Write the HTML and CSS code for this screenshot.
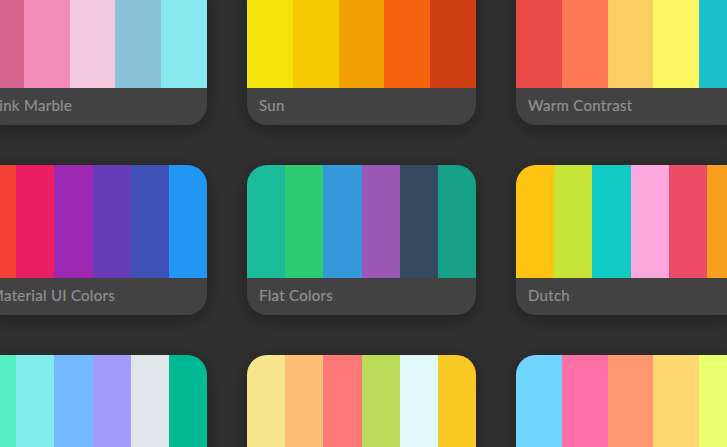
FILE: index.html
```html
<!DOCTYPE html>
<html>
<head>
<meta charset="utf-8">
<link rel="stylesheet" href="styles.css">
</head>
<body>
<div class="grid">
  <div class="card">
    <div class="swatches">
      <span style="background:#d66590"></span><span style="background:#f48cbb"></span><span style="background:#f5c9e2"></span><span style="background:#8ac3d9"></span><span style="background:#87e8f0"></span>
    </div>
    <div class="label">Pink Marble</div>
  </div>
  <div class="card">
    <div class="swatches">
      <span style="background:#f4e409"></span><span style="background:#f4c904"></span><span style="background:#f2a104"></span><span style="background:#f5630f"></span><span style="background:#cf3f11"></span>
    </div>
    <div class="label">Sun</div>
  </div>
  <div class="card">
    <div class="swatches">
      <span style="background:#e84a4a"></span><span style="background:#fe7856"></span><span style="background:#fccd63"></span><span style="background:#fdf862"></span><span style="background:#1cbec9"></span>
    </div>
    <div class="label">Warm Contrast</div>
  </div>
  <div class="card">
    <div class="swatches">
      <span style="background:#f44336"></span><span style="background:#e91e63"></span><span style="background:#9c27b0"></span><span style="background:#673ab7"></span><span style="background:#3f51b5"></span><span style="background:#2196f3"></span>
    </div>
    <div class="label">Material UI Colors</div>
  </div>
  <div class="card">
    <div class="swatches">
      <span style="background:#1abc9c"></span><span style="background:#2ecc71"></span><span style="background:#3498db"></span><span style="background:#9b59b6"></span><span style="background:#34495e"></span><span style="background:#16a085"></span>
    </div>
    <div class="label">Flat Colors</div>
  </div>
  <div class="card">
    <div class="swatches">
      <span style="background:#ffc312"></span><span style="background:#c4e538"></span><span style="background:#12cbc4"></span><span style="background:#fda7df"></span><span style="background:#ed4c67"></span><span style="background:#f79f1f"></span>
    </div>
    <div class="label">Dutch</div>
  </div>
  <div class="card">
    <div class="swatches">
      <span style="background:#55efc4"></span><span style="background:#81ecec"></span><span style="background:#74b9ff"></span><span style="background:#a29bfe"></span><span style="background:#dfe6e9"></span><span style="background:#00b894"></span>
    </div>
    <div class="label">American</div>
  </div>
  <div class="card">
    <div class="swatches">
      <span style="background:#f6e58d"></span><span style="background:#ffbe76"></span><span style="background:#ff7979"></span><span style="background:#badc58"></span><span style="background:#dff9fb"></span><span style="background:#f9ca24"></span>
    </div>
    <div class="label">Aussie</div>
  </div>
  <div class="card">
    <div class="swatches">
      <span style="background:#70d6ff"></span><span style="background:#ff70a6"></span><span style="background:#ff9770"></span><span style="background:#ffd670"></span><span style="background:#e9ff70"></span>
    </div>
    <div class="label">Pastel Pop</div>
  </div>
</div>
</body>
</html>
```

FILE: styles.css
```css
html, body {
  margin: 0;
  padding: 0;
  background: #303030;
  overflow: hidden;
  height: 447px;
}
.grid {
  display: grid;
  grid-template-columns: repeat(3, 229px);
  grid-auto-rows: 150px;
  column-gap: 40px;
  row-gap: 40px;
  margin-left: -22px;
  margin-top: -25px;
}
.card {
  display: flex;
  flex-direction: column;
  border-radius: 20px;
  overflow: hidden;
  background: #424242;
  box-shadow: 0 4px 18px rgba(0, 0, 0, 0.35);
}
.swatches {
  display: flex;
  height: 113px;
  flex: none;
}
.swatches span {
  flex: 1;
}
.label {
  flex: 1;
  display: flex;
  align-items: center;
  padding-left: 12px;
  padding-bottom: 3px;
  font-family: "Lato", "DejaVu Sans", sans-serif;
  font-size: 15px;
  letter-spacing: 0.3px;
  color: #909090;
  -webkit-text-stroke: 0.2px #909090;
}
```
